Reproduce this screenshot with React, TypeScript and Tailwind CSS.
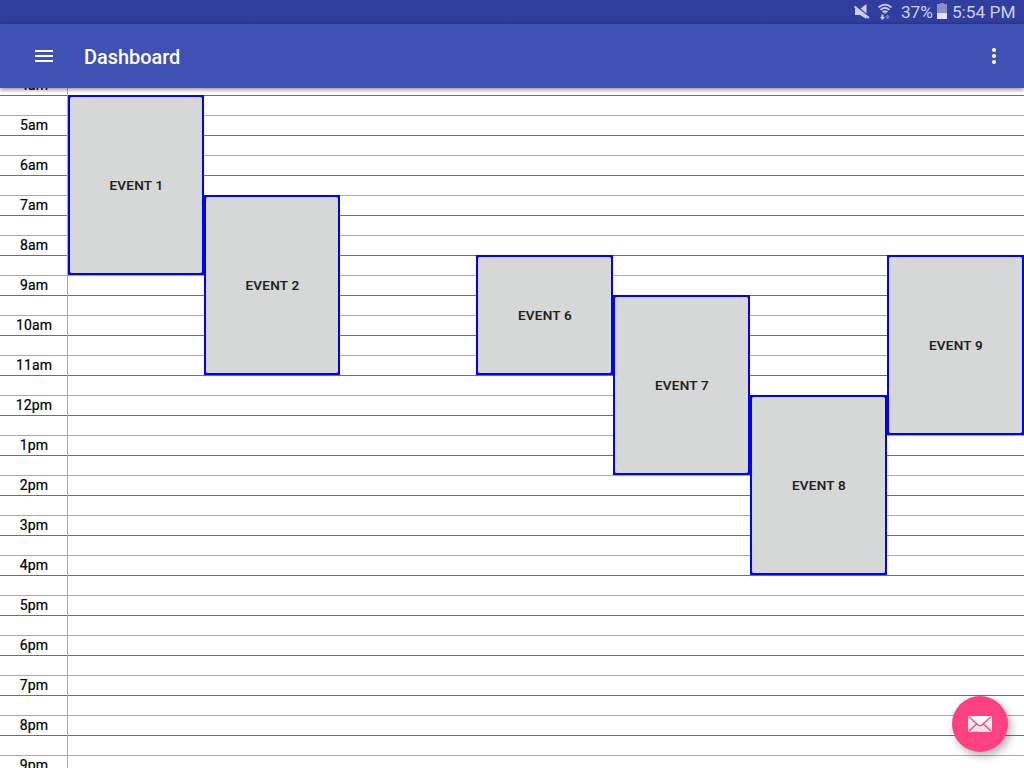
const times = ['4am','5am','6am','7am','8am','9am','10am','11am','12pm','1pm','2pm','3pm','4pm','5pm','6pm','7pm','8pm','9pm'];

const events = [
  { name: 'Event 1', col: 1, row: 2, span: 9 },
  { name: 'Event 2', col: 2, row: 7, span: 9 },
  { name: 'Event 6', col: 4, row: 10, span: 6 },
  { name: 'Event 7', col: 5, row: 12, span: 9 },
  { name: 'Event 8', col: 6, row: 17, span: 9 },
  { name: 'Event 9', col: 7, row: 10, span: 9 },
];

function StatusBar() {
  return (
    <div className="flex h-6 shrink-0 items-center justify-end bg-linear-to-b from-[#303f9f] from-85% to-[#2b388c] pr-[8.500px] text-[17.3px] leading-6 text-[#cbcfe7]">
      <svg className="mr-[8px] h-6 w-4" viewBox="0 0 16 24">
        <path d="M6.500 8.500 12.500 4v9.500zM1 8.500h2L12.500 16v3L6 15H1z" fill="#cbcfe7" />
        <path d="M0 5.200 15.500 17.200" stroke="#303f9f" strokeWidth="1.200" />
        <path d="M.5 6.500 15 18" stroke="#cbcfe7" strokeWidth="1.800" />
      </svg>
      <svg className="mr-[9px] h-6 w-[14px]" viewBox="0 0 14 24" fill="none" stroke="#cbcfe7" strokeWidth="1.600">
        <path d="M.5 7.500Q7 1.800 13.500 7.500M2.500 9.800Q7 6 11.500 9.800M4.500 12Q7 10.200 9.500 12" />
        <path d="M5.500 12.300h3L7 14z" fill="#cbcfe7" stroke="none" />
        <path d="M3.500 14.500h2v2.500h1.500L4.500 20 2 17h1.500z" fill="#cbcfe7" stroke="none" />
        <path d="M8.500 19h2v-2h1.500L9.500 14.500 7.200 17h1.300z" fill="#7580bd" stroke="none" />
      </svg>
      <span className="w-[36px] whitespace-nowrap">37%</span>
      <svg className="mr-[5px] h-6 w-[10px]" viewBox="0 0 10 24">
        <path d="M3 3h4v1h3v9H0V4h3z" fill="#8790c5" />
        <path d="M0 13h10v6H0z" fill="#e0e2f1" />
      </svg>
      <span className="whitespace-nowrap">5:54 PM</span>
    </div>
  );
}

function AppBar() {
  return (
    <header className="relative z-10 flex h-16 shrink-0 items-center bg-[#3f51b5] pl-[35px] pr-7 text-white shadow-[0_2px_4px_rgba(0,0,0,0.4)]">
      <svg className="h-3 w-[18px]" viewBox="0 0 18 12" fill="white">
        <path d="M0 0h18v2H0zM0 5h18v2H0zM0 10h18v2H0z" />
      </svg>
      <h1 className="ml-[31px] mt-[4px] text-[19.9px] font-medium leading-6">Dashboard</h1>
      <svg className="ml-auto h-4 w-1" viewBox="0 0 4 16" fill="white">
        <circle cx="2" cy="2" r="2" /><circle cx="2" cy="8" r="2" /><circle cx="2" cy="14" r="2" />
      </svg>
    </header>
  );
}

export default function App() {
  return (
    <div className="relative flex h-[768px] w-[1024px] flex-col overflow-hidden bg-white font-[Roboto,sans-serif]">
      <StatusBar />
      <AppBar />
      <main className="min-h-0 flex-1 overflow-hidden">
        <div className="-mt-3 grid grid-cols-[1024px]">
          <div className="col-start-1 row-start-1">
            {times.map((time) => (
              <div key={time}>
                <div className="flex h-5 border-b border-[#707070]">
                  <div className="-mb-px w-[68px] border-r border-[#aaa] pl-px text-center text-[14px] leading-[18px] tracking-[0.1px] text-black [-webkit-text-stroke:0.2px_black]">{time}</div>
                </div>
                <div className="flex h-5 border-b border-[#aaa]">
                  <div className="-mb-px w-[68px] border-r border-[#aaa]" />
                </div>
              </div>
            ))}
          </div>
          <div className="col-start-1 row-start-1 -mt-px ml-[68px] grid auto-rows-[20px] grid-cols-[136px_136px_136px_137px_137px_137px_137px] self-start">
            {events.map((event) => (
              <div
                key={event.name}
                className="flex border-2 border-[#0000ff] bg-[#3c3cdc] text-[13.5px] font-medium uppercase text-[#212121]"
                style={{ gridColumn: event.col, gridRow: `${event.row} / span ${event.span}` }}
              >
                <span className="flex h-full w-full items-center justify-center rounded-[2px] bg-[#d6d8d7] pt-px pl-px tracking-[0.25px] [-webkit-text-stroke:0.15px_#212121]">{event.name}</span>
              </div>
            ))}
          </div>
        </div>
      </main>
      <button className="absolute bottom-4 right-4 z-20 flex size-14 items-center justify-center rounded-full bg-[#ff4081] shadow-[3px_4px_8px_rgba(0,0,0,0.3)]" aria-label="Mail">
        <svg className="h-4 w-6" viewBox="0 0 24 16">
          <defs>
            <linearGradient id="paper" x1="0" y1="0" x2="0" y2="1">
              <stop offset="0" stopColor="#fff" /><stop offset="1" stopColor="#dedede" />
            </linearGradient>
          </defs>
          <rect width="24" height="16" rx=".5" fill="url(#paper)" />
          <path d="M.5.5 10.500 9.300Q12 10.500 13.500 9.300L23.500.5M.5 15.500 8.500 8M23.500 15.500 15.500 8" fill="none" stroke="#ff4081" strokeWidth="1.300" />
        </svg>
      </button>
    </div>
  );
}
